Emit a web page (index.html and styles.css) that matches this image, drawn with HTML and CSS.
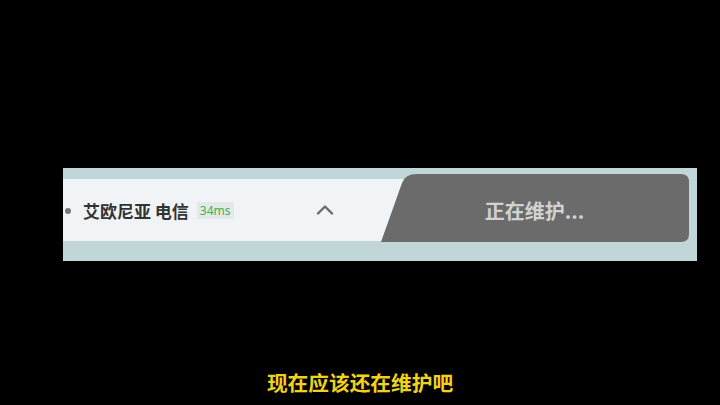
FILE: index.html
```html
<!DOCTYPE html>
<html lang="zh">
<head>
<meta charset="utf-8">
<link rel="stylesheet" href="styles.css">
</head>
<body>
<div class="band">
  <div class="server">
    <span class="dot"></span>
    <span class="name">艾欧尼亚 电信</span>
    <span class="ping">34ms</span>
    <svg class="chevron" width="18" height="11" viewBox="0 0 18 11"><path d="M2 9.5 L9 2.5 L16 9.5" fill="none" stroke="#6b6b6b" stroke-width="2.4" stroke-linecap="round" stroke-linejoin="round"/></svg>
  </div>
  <div class="play">
    <svg class="play-bg" width="309" height="68" viewBox="0 0 309 68"><path d="M1 68 L22 9 Q25 0 37 0 L301 0 Q309 0 309 8 L309 60 Q309 68 301 68 Z" fill="#6b6b6b"/></svg>
    <span class="play-label">正在维护...</span>
  </div>
</div>
<p class="subtitle">现在应该还在维护吧</p>
</body>
</html>
```
FILE: styles.css
```css
html, body {
  margin: 0;
  padding: 0;
  background: #000;
  font-family: "Noto Sans CJK SC", "Noto Sans", sans-serif;
}
body {
  width: 720px;
  height: 405px;
  overflow: hidden;
}
.band {
  margin: 168px 0 0 63px;
  width: 634px;
  box-sizing: border-box;
  height: 93px;
  background: #c1d6d8;
  display: flex;
  align-items: flex-start;
  padding: 6px 8px 0 0;
}
.server {
  flex: 1;
  height: 62px;
  margin-top: 5px;
  margin-right: -40px;
  background: #f0f4f7;
  display: flex;
  align-items: center;
  padding-left: 2px;
  padding-top: 1px;
  box-sizing: border-box;
}
.dot {
  width: 6px;
  height: 6px;
  border-radius: 50%;
  background: #777;
}
.name {
  margin-left: 12px;
  font-size: 17px;
  font-weight: 700;
  color: #333;
  line-height: 1;
}
.ping {
  margin-left: 8px;
  font-family: "Noto Sans", sans-serif;
  font-size: 12px;
  color: #3db34a;
  background: #e3e9e8;
  height: 17px;
  line-height: 17px;
  padding: 0 3px;
}
.chevron {
  margin-left: 82px;
  margin-top: -3px;
}
.play {
  position: relative;
  width: 309px;
  height: 68px;
  flex: none;
  display: flex;
  align-items: center;
  justify-content: center;
}
.play-bg {
  position: absolute;
  left: 0;
  top: 0;
}
.play-label {
  position: relative;
  font-size: 20px;
  font-weight: 700;
  color: #d2d2d2;
  margin-top: 4px;
}
.subtitle {
  margin: 108px 0 0;
  text-align: center;
  font-size: 20.7px;
  font-weight: 700;
  color: #f0d21c;
  line-height: 26px;
  text-shadow: 0 0 2px #000, 0 0 1px #000;
}
```
